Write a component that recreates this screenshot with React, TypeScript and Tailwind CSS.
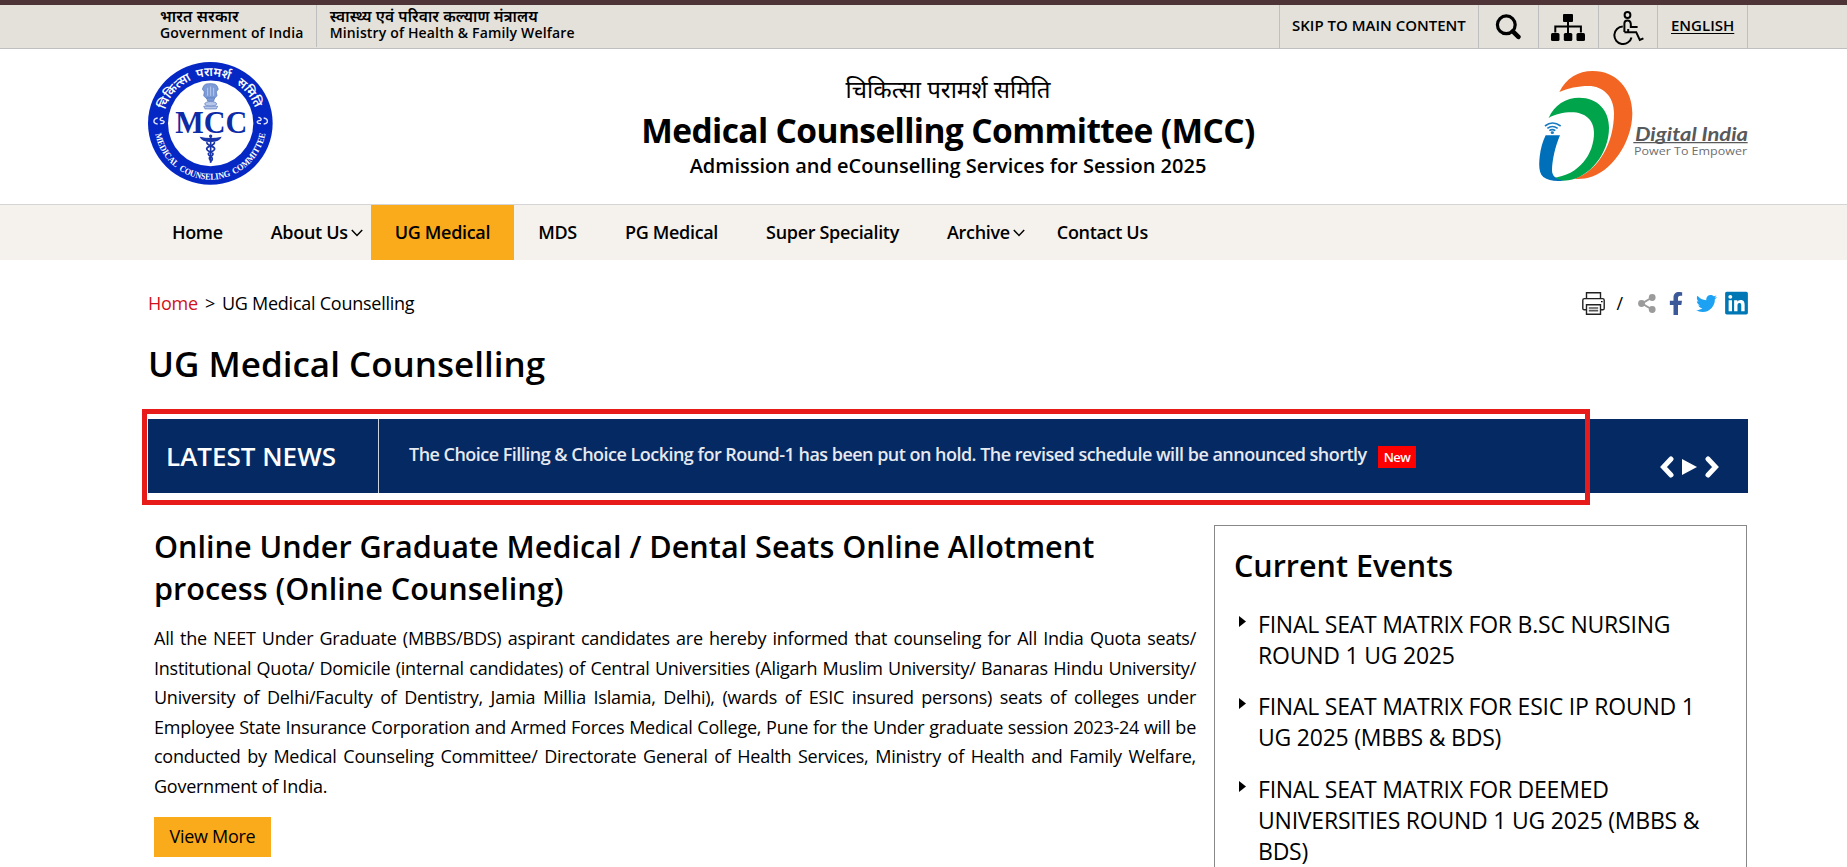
import React from 'react';
import { FaFacebookF, FaTwitter, FaLinkedin } from 'react-icons/fa';

interface NavItem {
  label: string;
  active?: boolean;
  dropdown?: boolean;
}

const navItems: NavItem[] = [
  { label: 'Home' },
  { label: 'About Us', dropdown: true },
  { label: 'UG Medical', active: true },
  { label: 'MDS' },
  { label: 'PG Medical' },
  { label: 'Super Speciality' },
  { label: 'Archive', dropdown: true },
  { label: 'Contact Us' },
];

const events = [
  'FINAL SEAT MATRIX FOR B.SC NURSING ROUND 1 UG 2025',
  'FINAL SEAT MATRIX FOR ESIC IP ROUND 1 UG 2025 (MBBS & BDS)',
  'FINAL SEAT MATRIX FOR DEEMED UNIVERSITIES ROUND 1 UG 2025 (MBBS & BDS)',
];

const MccLogo = () => (
  <svg width="125" height="123" viewBox="55 187 375 367" preserveAspectRatio="none">
    <defs>
      <path id="arc-top" d="M101 370 A141 141 0 0 1 383 370" />
      <path id="arc-bottom" d="M74 370 A168 168 0 0 0 410 370" />
    </defs>
    <ellipse cx="242" cy="370" rx="187" ry="183" fill="#0527c4" />
    <circle cx="243" cy="370" r="128" fill="#fff" />
    <g fill="#fff" fontSize="37" fontWeight="600" fontFamily="'Noto Sans Devanagari', 'Noto Sans', sans-serif" textAnchor="middle">
      <text>
        <textPath href="#arc-top" startOffset="102">चिकित्सा</textPath>
      </text>
      <text>
        <textPath href="#arc-top" startOffset="230">परामर्श</textPath>
      </text>
      <text>
        <textPath href="#arc-top" startOffset="350">समिति</textPath>
      </text>
    </g>
    <g fill="#fff" fontSize="27" fontWeight="700" fontFamily="'Liberation Serif', serif">
      <text>
        <textPath href="#arc-bottom" startOffset="32" textLength="120" lengthAdjust="spacingAndGlyphs">MEDICAL</textPath>
      </text>
      <text>
        <textPath href="#arc-bottom" startOffset="163" textLength="163" lengthAdjust="spacingAndGlyphs">COUNSELING</textPath>
      </text>
      <text>
        <textPath href="#arc-bottom" startOffset="337" textLength="160" lengthAdjust="spacingAndGlyphs">COMMITTEE</textPath>
      </text>
    </g>
    {/* side ornaments */}
    <g fill="none" stroke="#dfe5ff" strokeWidth="4">
      <path d="M84 354c-14 2-16 16 0 18M100 352c-12 2-10 10-2 10s8 10-6 9" />
      <path d="M402 354c14 2 16 16 0 18M386 352c12 2 10 10 2 10s-8 10 6 9" />
    </g>
    {/* lion capital */}
    <g fill="#7d9bd6" stroke="#5577bd" strokeWidth="2">
      <path d="M222 258c6-8 14-5 20-7 6 2 14-1 20 7l4 10-6 8 2 12-8 8h-24l-8-8 2-12-6-8z" />
      <path d="M231 294h24l-3 10h-18z" />
      <ellipse cx="243" cy="312" rx="18" ry="7" fill="#b7c8ea" />
      <path d="M222 319h42l-4 8h-34z" fill="#b7c8ea" />
    </g>
    <path d="M234 264v24M243 260v28M252 264v24" stroke="#d5e0f5" strokeWidth="2" />
    <text x="137" y="398" fill="#0d2ba6" fontSize="92" fontWeight="700" fontFamily="'Liberation Serif', serif" textLength="216" lengthAdjust="spacingAndGlyphs">
      MCC
    </text>
    {/* caduceus */}
    <path d="M210 410q33 8 66 0-6 16-33 16t-33-16z" fill="#1a35a8" />
    <g fill="none" stroke="#1a35a8" strokeWidth="5">
      <path d="M243 408v80" />
      <path d="M232 426c-4 12 23 10 23 20s-20 8-19 16 13 6 12 14-6 6-5 9M254 426c4 12-23 10-23 20s20 8 19 16-12 6-11 12 5 6 4 10" />
    </g>
    <circle cx="243" cy="408" r="5" fill="#1a35a8" />
  </svg>
);

const DigitalIndiaLogo = () => (
  <svg className="-mr-px" width="210" height="110" viewBox="57 33 630 330">
    <path
      fill="#f26522"
      d="M118 96C138 55 175 33 218 33C290 33 337 88 337 160C337 250 270 340 205 353C190 356 178 357 163 357C240 330 282 245 282 160C282 110 250 78 205 78C175 78 143 85 118 96Z"
    />
    <path
      fill="#00a44b"
      d="M86 174C102 135 138 113 178 113C232 113 267 150 267 203C267 280 210 350 145 361C130 363 112 363 97 354C180 345 222 280 222 218C222 180 195 157 155 157C130 157 105 163 86 174Z"
    />
    <path fill="#006fba" d="M77 226H120C105 262 97 300 96 330C96 348 108 358 130 362C105 364 84 362 70 351C57 340 56 318 59 290C62 265 68 244 77 226Z" />
    <g fill="none" stroke="#1a7bc0" strokeWidth="5">
      <path d="M75 198q22-18 47 0M82 205q15-11 31 0M88 212q9-6 18 0" />
    </g>
    <ellipse cx="97" cy="218" rx="5" ry="4" fill="#1a7bc0" />
    <text x="345" y="242" fill="#58595b" fontSize="58" fontWeight="700" fontStyle="italic" fontFamily="Lato, sans-serif" textLength="339" lengthAdjust="spacingAndGlyphs">
      Digital India
    </text>
    <path d="M340 248H683" stroke="#58595b" strokeWidth="4" />
    <text x="342" y="284" fill="#6d6e71" fontSize="35" fontFamily="'Open Sans', sans-serif" textLength="339" lengthAdjust="spacingAndGlyphs">
      Power To Empower
    </text>
  </svg>
);

const SearchIcon = () => (
  <svg width="26" height="27" viewBox="0 0 26 27" fill="none" stroke="#000">
    <circle cx="11.3" cy="11.8" r="8.9" strokeWidth="3.2" />
    <path d="M17.8 18.4l5.6 5.4" strokeWidth="4.6" strokeLinecap="round" />
  </svg>
);

const SitemapIcon = () => (
  <svg width="34" height="27" viewBox="0 0 34 27">
    <rect x="12" y="0" width="10" height="8" rx="1" />
    <rect x="0" y="19" width="8.5" height="8" rx="1.5" />
    <rect x="12.8" y="19" width="8.5" height="8" rx="1.5" />
    <rect x="25.5" y="19" width="8.5" height="8" rx="1.5" />
    <path d="M17 7v13M4.3 18.5v-6h25.6v6" fill="none" stroke="#000" strokeWidth="2" />
  </svg>
);

const WheelchairIcon = () => (
  <svg width="31" height="34" viewBox="0 0 31 34" fill="none" stroke="#000" strokeWidth="2">
    <circle cx="14.5" cy="4" r="2.900" />
    <path d="M11.400 21V12.600q0-3 3-3t3.400 3.200v3.200h6.800M11.400 21.200h11.800l3.600 7.800 3.600-1.600M15.200 18v3" />
    <path d="M9.800 15.600a8.700 8.700 0 1 0 8.700 10.800" />
  </svg>
);

const PrinterIcon = () => (
  <svg width="23" height="23" viewBox="0 0 23 23" fill="none" stroke="#222" strokeWidth="1.4">
    <path d="M4.5 6.5V.8h14v5.7" />
    <path d="M4 17.8H2.2Q.8 17.8.8 16.2V8.2q0-1.6 1.6-1.6h18.2q1.6 0 1.6 1.6v8q0 1.6-1.4 1.6H19" />
    <path d="M4.5 12.8h14v9.4h-14z" />
    <path d="M6.8 16h9.4M6.8 18.6h9.4" stroke="#555" strokeWidth="1.6" />
    <path d="M19 9.6h1.6" stroke="#000" />
  </svg>
);

const ShareIcon = () => (
  <svg width="18" height="19" viewBox="0 0 18 19">
    <path d="M14 3.5L4 9.5l10 6" fill="none" stroke="#9b9b9b" strokeWidth="2" />
    <circle cx="14.2" cy="3.5" r="3.4" fill="#9b9b9b" />
    <circle cx="3.5" cy="9.5" r="3.4" fill="#9b9b9b" />
    <circle cx="14.2" cy="15.5" r="3.4" fill="#9b9b9b" />
  </svg>
);

const TopBar = () => (
  <div className="h-[49px] border-t-[5px] border-b border-t-[#4e3437] border-b-[#bfbfbf] bg-[#e4e1da]">
    <div className="ml-[148px] flex h-full w-[1600px] justify-between font-semibold">
      <div className="flex h-[42px] text-[14px] leading-4 tracking-[0.2px]">
        <div className="border-r border-[#bfbfbf] pt-[2px] pr-3 pl-3">
          <p className="text-[15.5px] leading-[18px]">भारत सरकार</p>
          <p>Government of India</p>
        </div>
        <div className="pt-[2px] pl-[13px]">
          <p className="text-[15.5px] leading-[18px] tracking-[0.1px]">स्वास्थ्य एवं परिवार कल्याण मंत्रालय</p>
          <p className="tracking-[0.16px]">Ministry of Health &amp; Family Welfare</p>
        </div>
      </div>
      <div className="flex text-[15px]">
        <a className="w-[199px] border-l border-[#bfbfbf] pt-2 pl-3 leading-[24px] whitespace-nowrap">SKIP TO MAIN CONTENT</a>
        <a className="flex w-[60px] justify-center border-l border-[#bfbfbf] pt-[8px] pr-[2px]">
          <SearchIcon />
        </a>
        <a className="flex w-[60px] justify-center border-l border-[#bfbfbf] pt-[9px] pr-[2px]">
          <SitemapIcon />
        </a>
        <a className="flex w-[59px] justify-center border-l border-[#bfbfbf] pt-[6px]">
          <WheelchairIcon />
        </a>
        <a className="w-[91px] border-x border-[#bfbfbf] pt-2 pl-[13px] leading-[24px] underline underline-offset-2">ENGLISH</a>
      </div>
    </div>
  </div>
);

const Header = () => (
  <header className="ml-[148px] grid h-[155px] w-[1600px] grid-cols-[1fr_auto_1fr]">
    <div className="pt-[13px]">
      <MccLogo />
    </div>
    <div className="pt-[19px] text-center">
      <p className="h-[42px] text-[24px] leading-[41px]">चिकित्सा परामर्श समिति</p>
      <p className="text-[33.5px] leading-10 font-bold tracking-[-0.6px]">Medical Counselling Committee (MCC)</p>
      <p className="mt-[2px] text-[20px] leading-[28px] font-semibold">Admission and eCounselling Services for Session 2025</p>
    </div>
    <div className="flex justify-end pt-[22px]">
      <DigitalIndiaLogo />
    </div>
  </header>
);

const NavBar = () => (
  <nav className="h-[56px] border-t border-[#d5d5d5] bg-[#f5f2ed]">
    <ul className="ml-[148px] flex h-full w-[1600px] text-[18px] font-semibold tracking-[-0.32px]">
      {navItems.map((item) => (
        <li
          key={item.label}
          className={`flex items-center whitespace-nowrap pl-6 ${item.active ? 'bg-[#faab1c]' : ''} ${item.dropdown ? 'pr-2' : 'pr-6'}`}
        >
          {item.label}
          {item.dropdown && (
            <svg className="ml-[3px]" width="12" height="8" viewBox="0 0 12 8" fill="none" stroke="#000" strokeWidth="1.5">
              <path d="M.8 1L6 6.4 11.2 1" />
            </svg>
          )}
        </li>
      ))}
    </ul>
  </nav>
);

const LatestNews = () => (
  <section className="relative mt-[31px] flex h-[74px] bg-[#052963] text-white">
    <div className="w-[231px] border-r border-white/80 pl-[18px] text-[26px] leading-[74px] font-semibold">LATEST NEWS</div>
    <div className="flex flex-1 items-start pl-[30px]">
      <p className="text-[18px] leading-[70px] font-semibold tracking-[-0.52px] whitespace-nowrap text-[#e6eaf0]">
        The Choice Filling &amp; Choice Locking for Round-1 has been put on hold. The revised schedule will be announced shortly
      </p>
      <span className="mt-[27px] ml-[11px] h-[22px] bg-[#f00] px-[6px] text-[13px] leading-[22px] font-semibold tracking-[-0.5px]">New</span>
    </div>
    <div className="mt-[37px] mr-[29px] flex items-center gap-[7px] self-start">
      <svg width="15" height="22" viewBox="0 0 15 22" fill="none" stroke="#fff" strokeWidth="5" strokeLinecap="round">
        <path d="M11 3L3.5 11 11 19" />
      </svg>
      <svg width="15" height="16" viewBox="0 0 15 16" fill="#fff">
        <path d="M0 0l15 8-15 8z" />
      </svg>
      <svg width="15" height="22" viewBox="0 0 15 22" fill="none" stroke="#fff" strokeWidth="5" strokeLinecap="round">
        <path d="M4 3l7.500 8L4 19" />
      </svg>
    </div>
    {/* highlight frame around the announcement */}
    <div className="absolute -top-[10px] -left-[6px] h-[96px] w-[1448px] border-5 border-[#e81b1b]" />
  </section>
);

const App: React.FC = () => {
  return (
    <div className="h-[867px] w-[1847px] overflow-hidden bg-white font-['Open_Sans','Noto_Sans','Noto_Sans_Devanagari',sans-serif] text-black">
      <TopBar />
      <Header />
      <NavBar />
      <main className="ml-[148px] w-[1600px] pt-[31px]">
        <div className="flex h-6 items-center justify-between">
          <p className="text-[18px] leading-6 tracking-[-0.25px]">
            <a className="text-[#d0111b]">Home</a>
            <span className="mx-[7px]">&gt;</span>
            <span>UG Medical Counselling</span>
          </p>
          <div className="flex items-center text-[18px]">
            <PrinterIcon />
            <span className="mr-[15px] ml-[11px]">/</span>
            <ShareIcon />
            <FaFacebookF className="ml-[11px] h-[23px] w-[18px] text-[#3b5998]" />
            <FaTwitter className="ml-[11px] h-[21px] w-[21px] text-[#1da1f2]" />
            <FaLinkedin className="ml-2 h-[26px] w-[23px] text-[#0077b5]" />
          </div>
        </div>

        <h1 className="mt-[25px] text-[35px] leading-[48px] font-semibold">UG Medical Counselling</h1>

        <LatestNews />

        <div className="mt-8 flex">
          <article className="ml-[6px] w-[1042px]">
            <h2 className="text-[30.6px] leading-[42px] font-semibold">
              Online Under Graduate Medical / Dental Seats Online Allotment process (Online Counseling)
            </h2>
            <p className="mt-[15px] text-justify text-[18px] leading-[29.6px] tracking-[-0.25px]">
              All the NEET Under Graduate (MBBS/BDS) aspirant candidates are hereby informed that counseling for All India Quota seats/
              Institutional Quota/ Domicile (internal candidates) of Central Universities (Aligarh Muslim University/ Banaras Hindu University/
              University of Delhi/Faculty of Dentistry, Jamia Millia Islamia, Delhi), (wards of ESIC insured persons) seats of colleges under
              Employee State Insurance Corporation and Armed Forces Medical College, Pune for the Under graduate session 2023-24 will be
              conducted by Medical Counseling Committee/ Directorate General of Health Services, Ministry of Health and Family Welfare,
              Government of India.
            </p>
            <button className="mt-[15.600px] h-10 w-[117px] bg-[#faab1c] pb-[2px] text-[18px] tracking-[-0.3px]">View More</button>
          </article>

          <aside className="ml-[18px] h-[420px] w-[533px] border border-[#888] pt-[18px] pl-[19px]">
            <h2 className="text-[30.5px] leading-[42px] font-semibold">Current Events</h2>
            <ul className="mt-[23px] text-[23px] leading-[31px] tracking-[-0.22px]">
              {events.map((event) => (
                <li key={event} className="mb-[20.400px] flex">
                  <svg className="mt-[7px] mr-[12px] ml-[5px] shrink-0" width="7" height="11" viewBox="0 0 7 11">
                    <path d="M0 0l7 5.500L0 11z" />
                  </svg>
                  <span className="w-[460px]">{event}</span>
                </li>
              ))}
            </ul>
          </aside>
        </div>
      </main>
    </div>
  );
};

export default App;
